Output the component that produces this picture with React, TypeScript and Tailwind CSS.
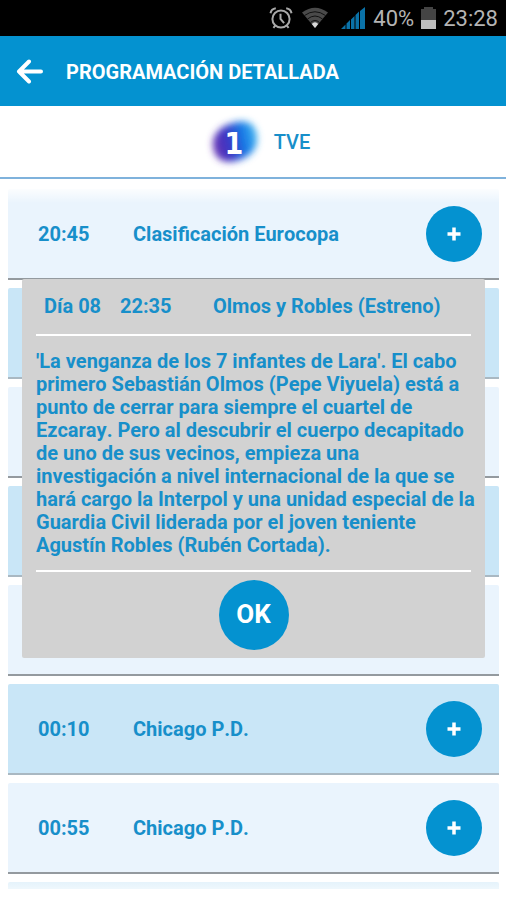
import clsx from "clsx";

type Programme = {
  time?: string;
  title?: string;
};

const programmes: Programme[] = [
  { time: "20:45", title: "Clasificación Eurocopa" },
  {},
  {},
  {},
  {},
  { time: "00:10", title: "Chicago P.D." },
  { time: "00:55", title: "Chicago P.D." },
  {},
];

function AlarmIcon() {
  return (
    <svg width="24" height="24" viewBox="0 0 24 24" fill="none" stroke="#a9a9a9" strokeWidth="2" aria-hidden="true">
      <circle cx="12" cy="13" r="8.6" />
      <path d="M11.5 7.8V13l3.6 4.2" />
      <path d="M1.5 7.2C2 4.4 4 2.6 6.8 2.2M22.5 7.2C22 4.4 20 2.6 17.2 2.2" />
      <path d="M6.4 19.4l-2 2.4M17.6 19.4l2 2.4" />
    </svg>
  );
}

function WifiIcon() {
  return (
    <svg width="28" height="22" viewBox="0 0 28 22" fill="none" aria-hidden="true">
      <path d="M1 5.5Q14 -4 27 5.5L14 21z" fill="#4a4a4a" />
      <path d="M3.5 8.5Q14 1 24.5 8.5M6.5 12Q14 6 21.5 12M9.5 15.5Q14 11.5 18.5 15.5" stroke="#111" strokeWidth="1" />
      <path d="M10.8 17Q14 13.5 17.2 17L14 21z" fill="#d8d8d8" />
    </svg>
  );
}

function SignalIcon() {
  return (
    <svg width="24" height="22" viewBox="0 0 24 22" fill="#0a72a8" aria-hidden="true">
      <path d="M0 22L4.5 17.5V22zM5.5 22V16.5L9 13V22zM10 22V12.5L13.5 9V22zM14.5 22V8L18 4.5V22zM19 22V4L24 0V22z" />
    </svg>
  );
}

function BatteryIcon() {
  return (
    <svg width="15" height="22" viewBox="0 0 15 22" aria-hidden="true">
      <path d="M3 0h9v2h3v12H0V2h3z" fill="#444" />
      <path d="M0 13h15v9H0z" fill="#bdbdbd" />
    </svg>
  );
}

function ChannelLogo() {
  return (
    <svg width="54" height="52" viewBox="0 0 54 52" className="overflow-visible" role="img" aria-label="La 1">
      <defs>
        <linearGradient id="logo-fill" x1="0" x2="1" y1="0.6" y2="0.4">
          <stop offset="0" stopColor="#6a35b4" />
          <stop offset="0.35" stopColor="#3a35c4" />
          <stop offset="0.7" stopColor="#1779e6" />
          <stop offset="1" stopColor="#3fb4f0" />
        </linearGradient>
        <filter id="logo-glow" x="-30%" y="-30%" width="160%" height="160%">
          <feGaussianBlur stdDeviation="3.5" />
        </filter>
      </defs>
      <path
        d="M5 30C4 19 12 9 29 6C42 4 49 10 49 22C50 33 41 42 28 45C14 48 6 42 5 30z"
        fill="url(#logo-fill)"
        filter="url(#logo-glow)"
      />
      <text
        x="26"
        y="38"
        textAnchor="middle"
        fill="#fff"
        className="font-['DejaVu_Sans_Condensed','DejaVu_Sans',sans-serif] text-[30px] font-bold">
        1
      </text>
    </svg>
  );
}

function StatusBar() {
  return (
    <div className="flex h-9 shrink-0 items-center justify-end bg-black pr-2 text-[22px] text-[#b4b4b4]">
      <AlarmIcon />
      <span className="ml-2 flex">
        <WifiIcon />
      </span>
      <span className="ml-3 flex">
        <SignalIcon />
      </span>
      <span className="ml-2">40%</span>
      <span className="mx-[7px] flex">
        <BatteryIcon />
      </span>
      <span>23:28</span>
    </div>
  );
}

function ProgrammeRow({ time, title, odd }: Programme & { odd: boolean }) {
  return (
    <li
      className={clsx(
        "flex h-[91px] shrink-0 items-center rounded-t-xs border-b-2 pr-[17px] pl-[30px]",
        odd ? "border-[#a9b8c2] bg-[#c9e6f7]" : "border-[#949a9f] bg-[#eaf4fd]"
      )}>
      <span className="w-[95px]">{time}</span>
      <span className="flex-1">{title}</span>
      <button
        type="button"
        aria-label="Añadir"
        className="flex size-14 items-center justify-center rounded-full bg-[#0492d0]">
        <svg width="14" height="14" viewBox="0 0 14 14" stroke="#fff" strokeWidth="3.5" aria-hidden="true">
          <path d="M7 0.5v13M0.5 7h13" />
        </svg>
      </button>
    </li>
  );
}

function ProgrammeDialog() {
  return (
    <div className="absolute inset-0 flex items-center justify-center pr-[21px] pl-[22px]">
      <section role="dialog" aria-label="Olmos y Robles" className="w-full rounded-xs bg-[#d2d2d2] px-[14px]">
        <header className="flex h-[57px] items-center border-b-2 border-white pl-2">
          <span className="w-[76px]">Día 08</span>
          <span className="w-[93px]">22:35</span>
          <h2>Olmos y Robles (Estreno)</h2>
        </header>
        <p className="-mr-3 pt-[14px] pb-[13px] leading-[23px]">
          'La venganza de los 7 infantes de Lara'. El cabo primero Sebastián Olmos (Pepe Viyuela) está a
          punto de cerrar para siempre el cuartel de Ezcaray. Pero al descubrir el cuerpo decapitado de
          uno de sus vecinos, empieza una investigación a nivel internacional de la que se hará cargo la
          Interpol y una unidad especial de la Guardia Civil liderada por el joven teniente Agustín
          Robles (Rubén Cortada).
        </p>
        <div className="flex justify-center border-t-2 border-white py-2">
          <button type="button" className="size-[70px] rounded-full bg-[#0492d0] text-[26px] text-white">
            OK
          </button>
        </div>
      </section>
    </div>
  );
}

export default function App() {
  return (
    <div className="flex h-screen flex-col bg-white font-[Roboto,sans-serif]">
      <StatusBar />
      <div className="relative flex min-h-0 flex-1 flex-col text-[20px] font-bold text-[#178fca] [font-kerning:none]">
        <header className="flex h-[70px] shrink-0 items-center bg-[#0492d0] pt-0.5 pl-4 text-white">
          <button type="button" aria-label="Volver" className="w-[50px]">
            <svg width="28" height="26" viewBox="0 0 28 26" fill="none" stroke="#fff" strokeWidth="4" strokeLinecap="round" strokeLinejoin="round" aria-hidden="true">
              <path d="M13 2.5L3 12.5l10 10M3 12.5h22" />
            </svg>
          </button>
          <h1 className="[font-kerning:normal]">PROGRAMACIÓN DETALLADA</h1>
        </header>
        <div className="flex h-[73px] shrink-0 items-center justify-center gap-3 border-b-2 border-[#7fb2dc] pl-3">
          <ChannelLogo />
          <span className="font-medium">TVE</span>
        </div>
        <main className="relative mb-[11px] min-h-0 flex-1 overflow-hidden pt-[10px] pr-[7px] pl-2">
          <ul className="flex flex-col gap-2">
            {programmes.map((programme, i) => (
              <ProgrammeRow key={i} {...programme} odd={i % 2 === 1} />
            ))}
          </ul>
          <div className="absolute inset-x-0 top-0 h-6 bg-linear-to-b from-white from-30% to-transparent" />
          <div className="absolute inset-x-0 bottom-0 h-2 bg-linear-to-t from-white/70 to-white/50" />
        </main>
        <ProgrammeDialog />
      </div>
    </div>
  );
}
